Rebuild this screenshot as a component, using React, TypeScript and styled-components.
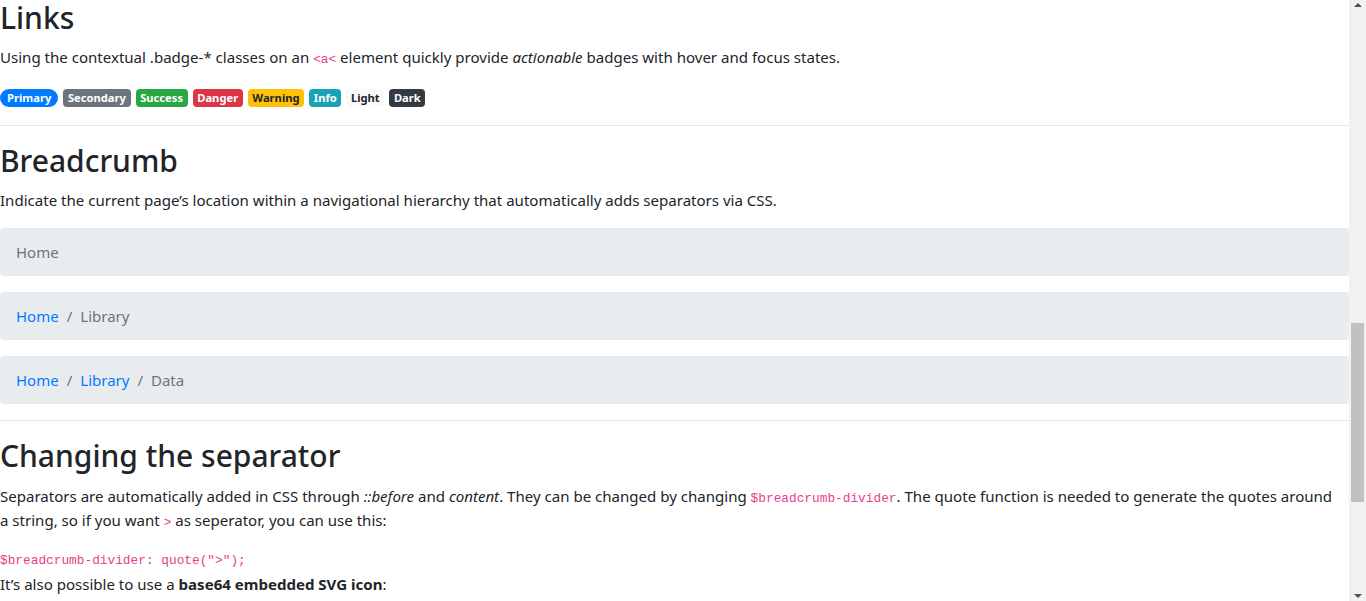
import React from "react";
import styled, { createGlobalStyle, css } from "styled-components";

const GlobalStyle = createGlobalStyle`
  html, body {
    margin: 0;
    padding: 0;
    overflow: hidden;
    background: #fff;
  }
  body {
    font-family: "Noto Sans", "Open Sans", sans-serif;
    font-size: 15px;
    line-height: 24px;
    color: #212529;
  }
  * { box-sizing: border-box; }
`;

const Page = styled.div`
  display: flex;
  height: 601px;
  overflow: hidden;
`;

const Main = styled.main`
  flex: 1;
  min-width: 0;
  overflow: hidden;
`;

const Content = styled.div`
  margin-top: -1.4px;
`;

const Heading = styled.h2`
  margin: 0 0 8px;
  font-size: 30px;
  font-weight: 500;
  line-height: 38.4px;
  color: #212529;
`;

const Text = styled.p`
  margin: 0 0 16px;
  font-size: 15.05px;
  line-height: 24px;
`;

const Code = styled.code`
  font-family: Consolas, "Liberation Mono", monospace;
  font-size: 12.8px;
  line-height: 1;
  color: #e83e8c;
`;

const Pre = styled.pre`
  margin: 0;
  padding-top: 1px;
  font-family: Consolas, "Liberation Mono", monospace;
  font-size: 12.8px;
  line-height: 24px;
  height: 24px;
  color: #e83e8c;
`;

const BadgeRow = styled.div`
  display: flex;
  align-items: center;
  gap: 5px;
  height: 24px;
  margin-bottom: 16px;
  padding-top: 1px;
`;

type Variant =
  | "primary"
  | "secondary"
  | "success"
  | "danger"
  | "warning"
  | "info"
  | "light"
  | "dark";

const badgeColors: Record<Variant, [string, string]> = {
  primary: ["#007bff", "#fff"],
  secondary: ["#6c757d", "#fff"],
  success: ["#28a745", "#fff"],
  danger: ["#dc3545", "#fff"],
  warning: ["#ffc107", "#212529"],
  info: ["#17a2b8", "#fff"],
  light: ["#f8f9fa", "#212529"],
  dark: ["#343a40", "#fff"],
};

const Badge = styled.a<{ $variant: Variant; $pill?: boolean }>`
  display: inline-block;
  height: 18px;
  padding: 3px 4.6px;
  font-size: 11.2px;
  font-weight: 700;
  line-height: 12px;
  text-decoration: none;
  white-space: nowrap;
  border-radius: 4px;
  background: ${(p) => badgeColors[p.$variant][0]};
  color: ${(p) => badgeColors[p.$variant][1]};
  ${(p) =>
    p.$pill &&
    css`
      padding-left: 7px;
      padding-right: 7px;
      border-radius: 160px;
    `}
`;

const Divider = styled.hr`
  margin: 0 0 16px;
  border: 0;
  border-top: 1px solid rgba(0, 0, 0, 0.1);
  height: 0;
`;

const Breadcrumb = styled.ol`
  display: flex;
  flex-wrap: wrap;
  list-style: none;
  margin: 0 0 16px;
  padding: 12px 16px;
  background: #e9ecef;
  border-radius: 4px;
  line-height: 24px;

  & > li + li::before {
    content: "/";
    display: inline-block;
    padding: 0 8px;
    color: #6c757d;
  }
`;

const Crumb = styled.li<{ $active?: boolean }>`
  display: flex;
  color: ${(p) => (p.$active ? "#6c757d" : "#007bff")};
`;

const CrumbLink = styled.a`
  color: #007bff;
  text-decoration: none;
`;

const Scrollbar = styled.aside`
  width: 17px;
  flex: none;
  height: 601px;
  background: #f1f1f1;
  display: flex;
  flex-direction: column;
`;

const Arrow = styled.div<{ $down?: boolean }>`
  height: 17px;
  flex: none;
  display: flex;
  justify-content: center;
  align-items: ${(p) => (p.$down ? "flex-end" : "flex-start")};
  padding: ${(p) => (p.$down ? "0 0 3px" : "3px 0 0")};
  &::after {
    content: "";
    width: 0;
    height: 0;
    border-left: 4px solid transparent;
    border-right: 4px solid transparent;
    ${(p) =>
      p.$down
        ? css`border-top: 4px solid #505050;`
        : css`border-bottom: 4px solid #505050;`}
  }
`;

const Track = styled.div`
  flex: 1;
  padding-top: 306px;
`;

const Thumb = styled.div`
  height: 179px;
  margin: 0 2px;
  background: #c1c1c1;
`;

const badges: { v: Variant; label: string; pill?: boolean }[] = [
  { v: "primary", label: "Primary", pill: true },
  { v: "secondary", label: "Secondary" },
  { v: "success", label: "Success" },
  { v: "danger", label: "Danger" },
  { v: "warning", label: "Warning" },
  { v: "info", label: "Info" },
  { v: "light", label: "Light" },
  { v: "dark", label: "Dark" },
];

const crumbs: string[][] = [["Home"], ["Home", "Library"], ["Home", "Library", "Data"]];

export default function App() {
  return (
    <Page>
      <GlobalStyle />
      <Main>
        <Content>
          <Heading>Links</Heading>
          <Text>
            Using the contextual .badge-* classes on an <Code>&lt;a&lt;</Code> element quickly
            provide <em>actionable</em> badges with hover and focus states.
          </Text>
          <BadgeRow>
            {badges.map((b) => (
              <Badge key={b.v} href="#" $variant={b.v} $pill={b.pill}>
                {b.label}
              </Badge>
            ))}
          </BadgeRow>
          <Divider />
          <Heading>Breadcrumb</Heading>
          <Text>
            Indicate the current page’s location within a navigational hierarchy that
            automatically adds separators via CSS.
          </Text>
          {crumbs.map((trail, i) => (
            <Breadcrumb key={i}>
              {trail.map((c, j) => {
                const active = j === trail.length - 1;
                return (
                  <Crumb key={c} $active={active}>
                    {active ? c : <CrumbLink href="#">{c}</CrumbLink>}
                  </Crumb>
                );
              })}
            </Breadcrumb>
          ))}
          <Divider />
          <Heading>Changing the separator</Heading>
          <Text>
            Separators are automatically added in CSS through <em>::before</em> and{" "}
            <em>content</em>. They can be changed by changing <Code>$breadcrumb-divider</Code>.
            The quote function is needed to generate the quotes around
            <br />a string, so if you want <Code>&gt;</Code> as seperator, you can use this:
          </Text>
          <Pre>$breadcrumb-divider: quote("&gt;");</Pre>
          <Text>
            It’s also possible to use a <strong>base64 embedded SVG icon</strong>:
          </Text>
        </Content>
      </Main>
      <Scrollbar>
        <Arrow />
        <Track>
          <Thumb />
        </Track>
        <Arrow $down />
      </Scrollbar>
    </Page>
  );
}
